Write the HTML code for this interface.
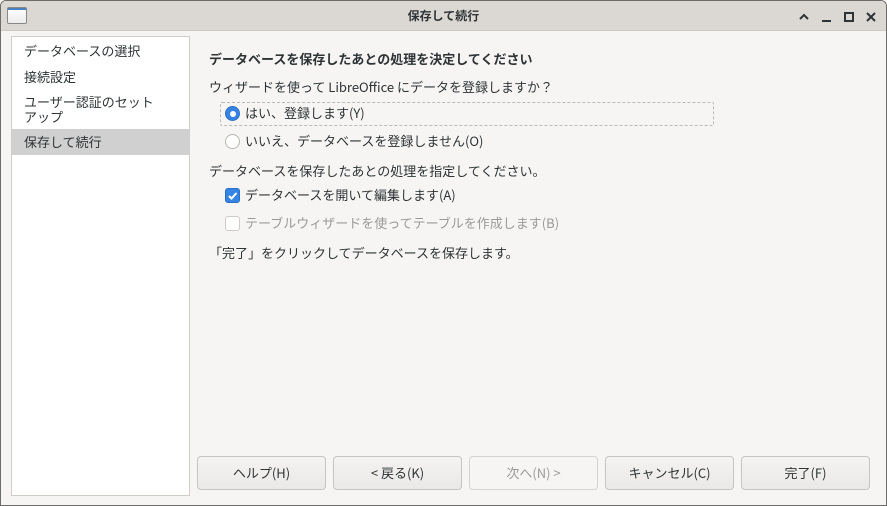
<!DOCTYPE html>
<html><head><meta charset="utf-8"><style>
*{box-sizing:border-box;margin:0;padding:0}
body{width:887px;height:506px;overflow:hidden;background:#f6f5f4;font-family:"Noto Sans CJK JP","DejaVu Sans",sans-serif;font-size:13px;color:#2e3436;position:relative}
.win{position:absolute;left:0;top:0;width:887px;height:506px;border:1px solid #6e6c6a;border-radius:6px 6px 0 0;overflow:hidden;background:#f6f5f4}
.title{position:absolute;left:0;top:0;width:885px;height:30px;background:#dbd7d3;border-bottom:1px solid #cdc9c5}
.title .t{position:absolute;left:0;right:0;top:6px;text-align:center;font-size:12px;font-weight:bold;color:#2e3436;line-height:18px}
.icon{position:absolute;left:6px;top:6px;width:20px;height:17px;border:1px solid #8a8885;border-radius:2px;background:linear-gradient(#fff,#ececec)}
.icon:before{content:"";position:absolute;left:0;right:0;top:0;height:2px;background:#4a7fc0}
.side{position:absolute;left:10px;top:35px;width:179px;height:460px;background:#fff;border:1px solid #d0ccc8}
.side div{position:absolute;left:0;width:178px;padding-left:12px;line-height:15px}
.sel{background:#d0d0d0}
.abs{position:absolute;white-space:nowrap;line-height:18px}
.radio{position:absolute;width:15px;height:15px;border-radius:50%;border:1px solid #b8b5b1;background:#fff}
.radio.on{background:#3584e4;border-color:#2a6fc5}
.radio.on:after{content:"";position:absolute;left:3.5px;top:3.5px;width:6px;height:6px;border-radius:50%;background:#fff}
.cb{position:absolute;width:15px;height:15px;border-radius:3px;border:1px solid #b8b5b1;background:#fff}
.cb.on{background:#3584e4;border-color:#2a6fc5}
.btn{position:absolute;top:455px;width:129px;height:34px;border:1px solid #c8c4c0;border-radius:4px;background:linear-gradient(#f4f3f2,#ebe9e7);text-align:center;line-height:32px;font-size:13px}
.btn.dis{background:#f6f5f4;color:#9a9a98;border-color:#d6d2ce}
</style></head><body><div class="win">
<div class="title"><div class="icon"></div><div class="t">保存して続行</div>
<svg class="abs" style="left:795px;top:9px" width="85" height="14" viewBox="0 0 85 14"><path d="M4 9 L8 5 L12 9" stroke="#2e3436" stroke-width="2" fill="none"/><rect x="26" y="10" width="9" height="2" fill="#2e3436"/><rect x="49" y="3" width="8" height="8" stroke="#2e3436" stroke-width="2" fill="none"/><path d="M71 3 L79 11 M79 3 L71 11" stroke="#2e3436" stroke-width="2"/></svg>
</div>
<div class="side">
<div style="top:5px;line-height:18px">データベースの選択</div>
<div style="top:31px;line-height:18px">接続設定</div>
<div style="top:57px">ユーザー認証のセット<br>アップ</div>
<div class="sel" style="top:92px;height:26px;line-height:26px">保存して続行</div>
</div>
<div class="abs" style="left:208px;top:49px;font-weight:bold">データベースを保存したあとの処理を決定してください</div>
<div class="abs" style="left:208px;top:77px">ウィザードを使って LibreOffice にデータを登録しますか？</div>
<div class="abs" style="left:219px;top:101px;width:494px;height:24px;border:1px dashed #bdb9b5;border-radius:2px"></div>
<div class="radio on" style="left:224px;top:105px"></div>
<div class="abs" style="left:244px;top:103px">はい、登録します(Y)</div>
<div class="radio" style="left:224px;top:133px"></div>
<div class="abs" style="left:244px;top:131px">いいえ、データベースを登録しません(O)</div>
<div class="abs" style="left:208px;top:161px">データベースを保存したあとの処理を指定してください。</div>
<div class="cb on" style="left:224px;top:187px"><svg width="13" height="13" style="position:absolute;left:0;top:0"><path d="M3 7 L5.5 9.5 L10.5 4" stroke="#fff" stroke-width="2" fill="none"/></svg></div>
<div class="abs" style="left:244px;top:185px">データベースを開いて編集します(A)</div>
<div class="cb" style="left:224px;top:215px;border-color:#cfcbc7"></div>
<div class="abs" style="left:244px;top:213px;color:#9a9a98">テーブルウィザードを使ってテーブルを作成します(B)</div>
<div class="abs" style="left:208px;top:243px">「完了」をクリックしてデータベースを保存します。</div>
<div class="btn" style="left:196px">ヘルプ(H)</div>
<div class="btn" style="left:332px">&lt; 戻る(K)</div>
<div class="btn dis" style="left:468px">次へ(N) &gt;</div>
<div class="btn" style="left:604px">キャンセル(C)</div>
<div class="btn" style="left:740px">完了(F)</div>
</div></body></html>
